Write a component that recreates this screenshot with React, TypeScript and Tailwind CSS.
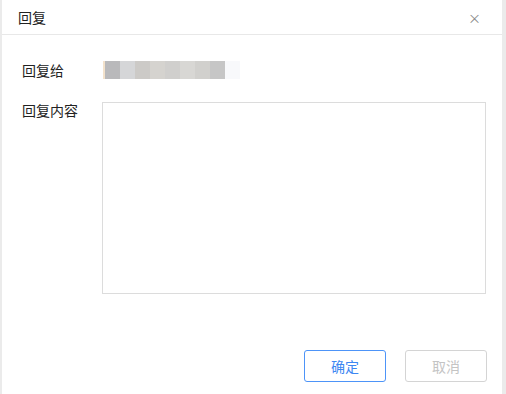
import { ReactElement, useState } from "react";

const BLUR_BLOCKS = [
  "#b9b9bb",
  "#d5d6d8",
  "#cccac7",
  "#d5d3cf",
  "#d0cfcd",
  "#d8d7d4",
  "#d1d0cd",
  "#c6c6c6",
  "#f8f9fb",
];

const ReplyDialog = (): ReactElement => {
  const [content, setContent] = useState<string>("");

  return (
    <div className="flex flex-col w-[500px] h-[394px] bg-white">
      <div className="flex items-center justify-between h-[35px] pl-4 pr-[21px] border-b border-[#e8e8e8]">
        <span className="text-[14px] text-[#222]">回复</span>
        <button className="text-[#888] text-[13px] leading-none pt-[1px]">×</button>
      </div>
      <div className="flex flex-col flex-1 pt-[24px] pl-5 pr-[15px]">
        <div className="flex items-center h-[22px]">
          <span className="w-[81px] text-[14px] text-[#222]">回复给</span>
          <div className="flex h-[18px]">
            <div className="w-[2px] bg-[#f3e2cc]" />
            {BLUR_BLOCKS.map((c, i) => (
              <div key={i} className="w-[15px] h-full" style={{ background: c }} />
            ))}
          </div>
        </div>
        <div className="flex mt-[21px]">
          <span className="w-[80px] text-[14px] text-[#222] leading-[14px] pt-[1px]">回复内容</span>
          <textarea
            className="w-[384px] h-[192px] border border-[#dcdcdc] resize-none outline-none p-2 text-[14px]"
            value={content}
            onChange={(e) => setContent(e.target.value)}
          />
        </div>
        <div className="flex justify-end gap-[19px] mt-[56px]">
          <button className="w-[82px] h-[32px] rounded-[3px] border border-[#4d94f8] text-[#3c87f2] text-[14px]">
            确定
          </button>
          <button
            className="w-[82px] h-[32px] rounded-[3px] border border-[#d4d4d4] text-[#c4c4c4] text-[14px]"
            disabled
          >
            取消
          </button>
        </div>
      </div>
    </div>
  );
};

export default function App(): ReactElement {
  return (
    <div
      className="flex w-[506px] h-[394px] bg-[#ebebeb] pl-[2px] overflow-hidden"
      style={{ fontFamily: '"Noto Sans CJK SC", "Liberation Sans", sans-serif' }}
    >
      <ReplyDialog />
    </div>
  );
}
